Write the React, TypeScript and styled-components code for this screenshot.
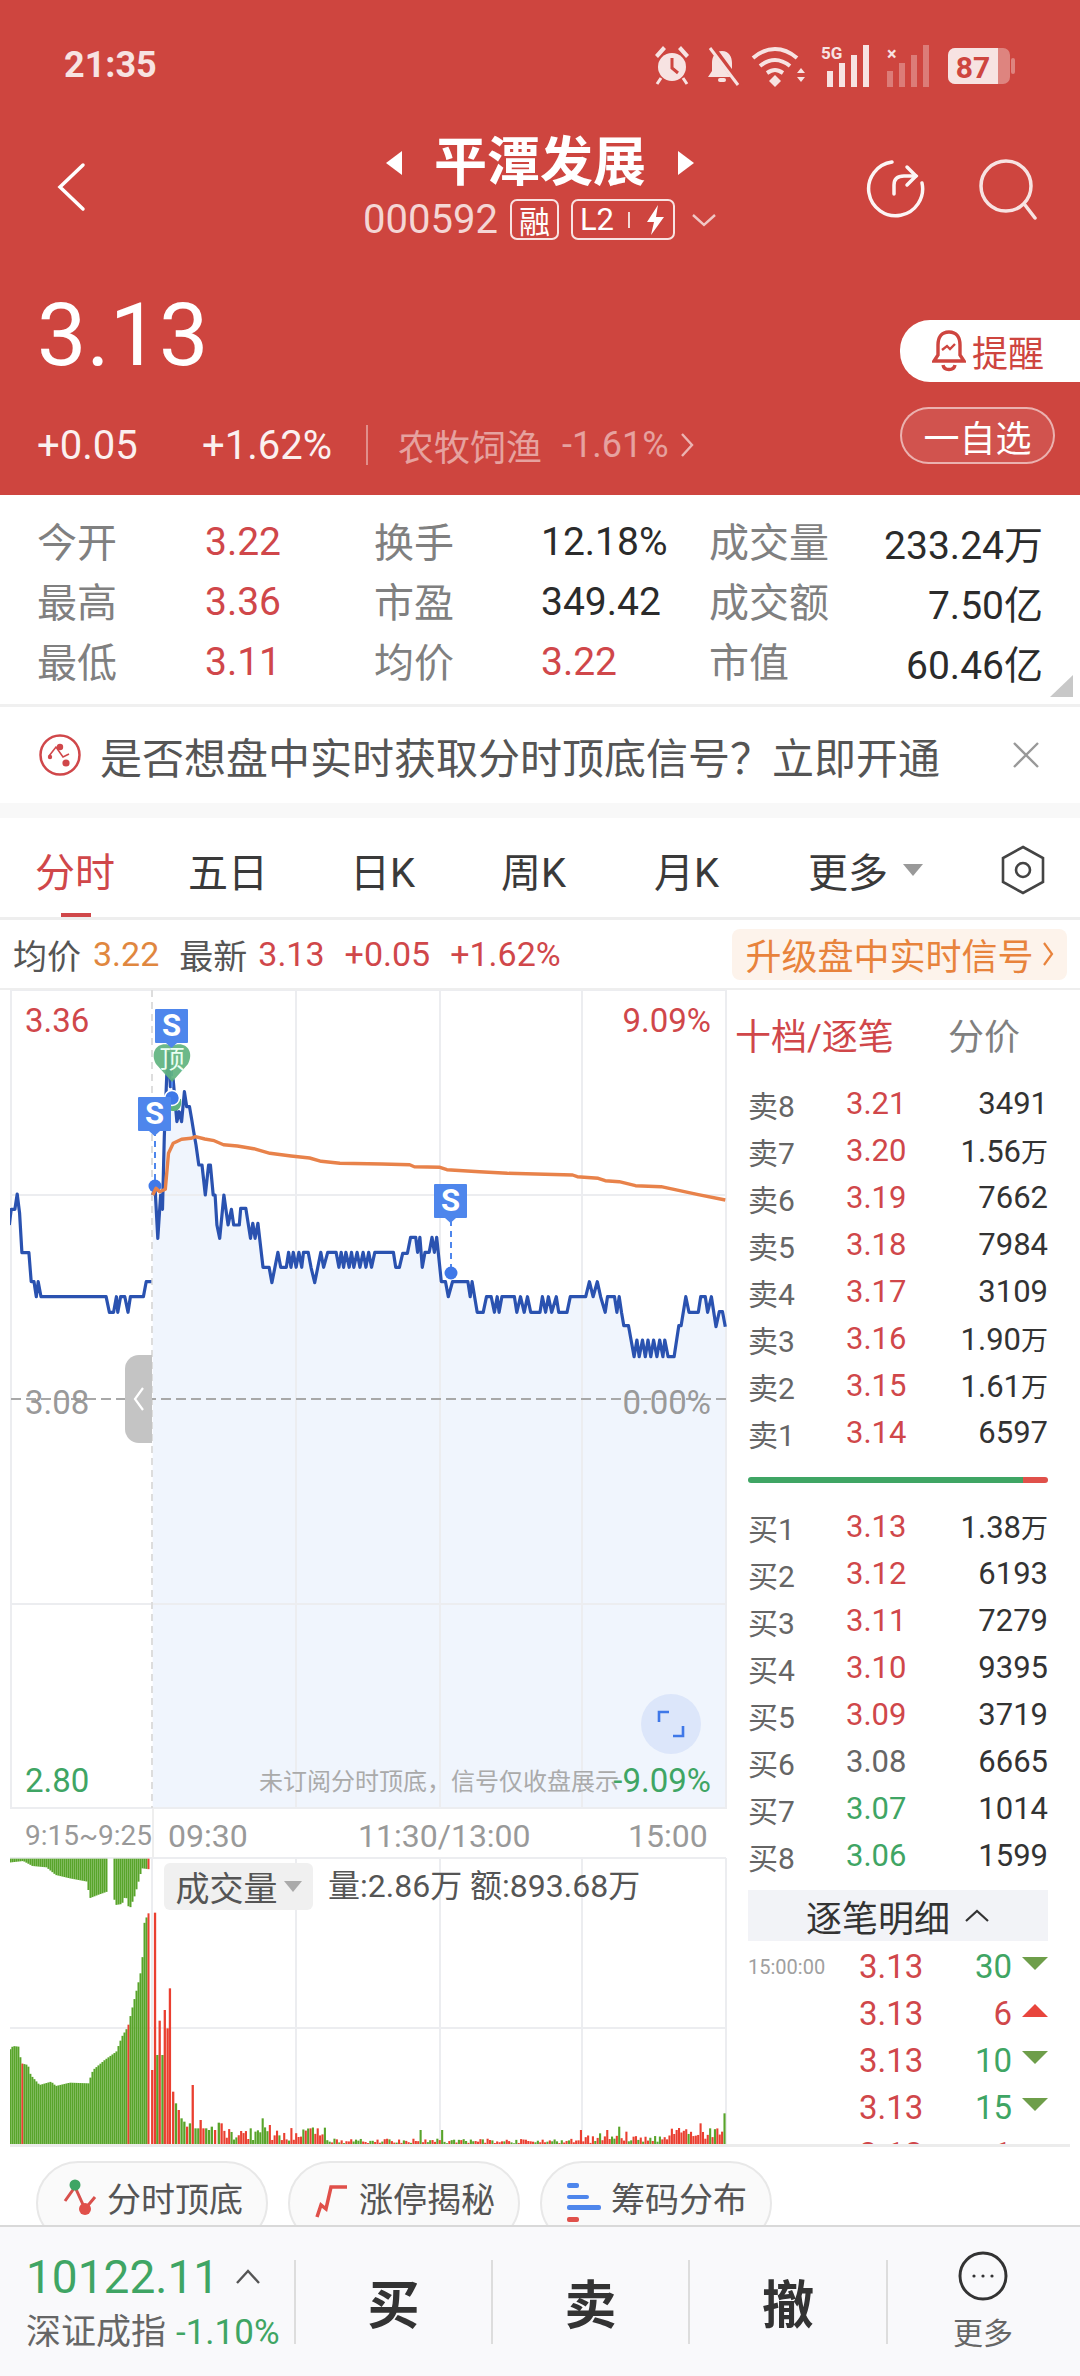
import styled, { createGlobalStyle } from 'styled-components';

const RED = '#d0474a';
const GREEN = '#3fa564';
const BRAND = '#ce453f';
const FONT = 'Roboto, "Noto Sans CJK SC", sans-serif';

const GlobalStyle = createGlobalStyle`
   html, body {
      margin: 0;
      padding: 0;
      background: #fff;
   }
   * {
      box-sizing: border-box;
   }
`;

const Page = styled.div`
   width: 1080px;
   height: 2376px;
   overflow: hidden;
   display: flex;
   flex-direction: column;
   font-family: ${FONT};
   color: #333;
`;

/* ---------- header ---------- */
const Header = styled.header`
   height: 495px;
   flex: none;
   background: ${BRAND};
   color: #fff;
`;

const StatusBar = styled.div`
   height: 126px;
   padding: 4px 64px 0;
   display: flex;
   align-items: center;
   justify-content: space-between;
`;

const Clock = styled.span`
   font-size: 36px;
   font-weight: 700;
   opacity: 0.85;
`;

const StatusIcons = styled.svg`
   display: block;
   opacity: 0.85;
`;

const TitleRow = styled.div`
   margin-top: 11px;
   display: grid;
   grid-template-columns: 1fr auto 1fr;
   align-items: center;
`;

const BackCell = styled.div`
   padding-left: 56px;
`;

const ActionCell = styled.div`
   display: flex;
   justify-content: flex-end;
   align-items: center;
   gap: 52px;
   padding-right: 42px;
`;

const TitleCol = styled.div`
   display: flex;
   flex-direction: column;
   align-items: center;
   gap: 10px;
`;

const NameLine = styled.div`
   display: flex;
   align-items: center;
   gap: 30px;
   height: 52px;
`;

const StockName = styled.span`
   font-size: 53px;
   line-height: 52px;
   font-weight: 700;
`;

const CodeLine = styled.div`
   display: flex;
   align-items: center;
   height: 41px;
   gap: 12px;
`;

const StockCode = styled.span`
   font-size: 40px;
   color: rgba(255, 255, 255, 0.78);
`;

const Badge = styled.span`
   height: 41px;
   padding: 0 7px;
   display: inline-flex;
   align-items: center;
   gap: 14px;
   border: 2px solid rgba(255, 255, 255, 0.85);
   border-radius: 7px;
   font-size: 31px;
`;

const BadgeRule = styled.i`
   width: 2px;
   height: 16px;
   background: #fff;
   opacity: 0.8;
`;

const CodeCaret = styled.svg`
   margin-left: 4px;
`;

const QuoteRow = styled.div`
   margin-top: 50px;
   display: flex;
   justify-content: space-between;
`;

const QuoteLeft = styled.div`
   padding-left: 37px;
`;

const Price = styled.div`
   font-size: 88px;
   line-height: 90px;
`;

const ChangeRow = styled.div`
   margin-top: 43px;
   height: 44px;
   display: flex;
   align-items: center;
   font-size: 40px;
`;

const ChangeValue = styled.span<{ $w: number }>`
   width: ${p => p.$w}px;
   opacity: 0.92;
`;

const ChangeRule = styled.i`
   width: 2px;
   height: 40px;
   margin-right: 30px;
   background: rgba(255, 255, 255, 0.4);
`;

const Sector = styled.span`
   font-size: 36px;
   color: rgba(255, 255, 255, 0.5);
   margin-right: 20px;
`;

const SectorCaret = styled.svg`
   margin-left: -9px;
`;

const PillCol = styled.div`
   width: 180px;
   padding-top: 30px;
   display: flex;
   flex-direction: column;
   gap: 25px;
`;

const RemindPill = styled.div`
   height: 62px;
   padding-left: 32px;
   display: flex;
   align-items: center;
   gap: 6px;
   background: #fff;
   border-radius: 30px 0 0 30px;
   color: ${BRAND};
   font-size: 36px;
`;

const WatchPill = styled.div`
   width: 155px;
   height: 57px;
   display: flex;
   align-items: center;
   justify-content: center;
   border: 2px solid rgba(255, 255, 255, 0.55);
   background: rgba(255, 255, 255, 0.08);
   border-radius: 29px;
   font-size: 36px;
`;

/* ---------- stats ---------- */
const Stats = styled.section`
   position: relative;
   height: 212px;
   flex: none;
   padding: 17px 37px 0;
   display: grid;
   grid-template-columns: 168px 169px 167px 168px 124px 210px;
   grid-auto-rows: 60px;
   align-items: center;
   border-bottom: 3px solid #f0f0f0;
`;

const StatLabel = styled.span`
   font-size: 40px;
   color: #808080;
   white-space: nowrap;
   margin-bottom: 5px;
`;

const StatValue = styled.span<{ $red?: boolean; $end?: boolean }>`
   font-size: 39px;
   color: ${p => (p.$red ? RED : '#2b2b2b')};
   text-align: ${p => (p.$end ? 'right' : 'left')};
`;

const CornerMark = styled.i`
   position: absolute;
   right: 7px;
   bottom: 7px;
   width: 0;
   height: 0;
   border-left: 23px solid transparent;
   border-bottom: 22px solid #c8c8c8;
`;

/* ---------- banner ---------- */
const Banner = styled.section`
   height: 96px;
   flex: none;
   padding: 0 40px 0 39px;
   display: flex;
   align-items: center;
   font-size: 42px;
   color: #555;
`;

const BannerText = styled.span`
   margin-left: 19px;
   flex: 1;
   white-space: nowrap;
`;

const Band = styled.div`
   height: 15px;
   flex: none;
   background: #f8f8f8;
`;

/* ---------- tabs ---------- */
const Tabs = styled.nav`
   position: relative;
   height: 102px;
   flex: none;
   padding: 4px 0 0 35px;
   display: flex;
   align-items: center;
   border-bottom: 3px solid #eee;
`;

const Tab = styled.span<{ $w: number; $on?: boolean }>`
   width: ${p => p.$w}px;
   flex: none;
   font-size: 40px;
   color: ${p => (p.$on ? RED : '#3a3a3a')};
`;

const TabMark = styled.i`
   position: absolute;
   left: 61px;
   bottom: 0;
   width: 30px;
   height: 4px;
   background: ${RED};
`;

const MoreCaret = styled.span`
   width: 97px;
   flex: none;
   display: flex;
`;

/* ---------- summary ---------- */
const Summary = styled.section`
   height: 70px;
   flex: none;
   padding: 0 13px;
   display: flex;
   align-items: center;
   font-size: 34px;
   color: #555;
   border-bottom: 2px solid #eee;
`;

const SumValue = styled.span<{ $c: string; $ml: number }>`
   color: ${p => p.$c};
   margin-left: ${p => p.$ml}px;
   margin-right: 20px;
`;

const UpgradeBtn = styled.div`
   margin-left: auto;
   height: 51px;
   width: 335px;
   display: flex;
   align-items: center;
   justify-content: center;
   gap: 8px;
   background: #fdf3eb;
   border-radius: 8px;
   color: #e8833c;
   font-size: 36px;
`;

/* ---------- market area ---------- */
const Market = styled.section`
   height: 1154px;
   flex: none;
   padding-left: 10px;
   display: flex;
   overflow: hidden;
`;

const ChartCol = styled.div`
   width: 717px;
   flex: none;
   display: flex;
   flex-direction: column;
`;

const PricePanel = styled.div`
   position: relative;
   height: 819px;
   flex: none;
`;

const VolumePanel = styled.div`
   position: relative;
   height: 287px;
   flex: none;
   overflow: hidden;
`;

const ChartSvg = styled.svg`
   display: block;
`;

const AxisLabel = styled.span<{ $c: string; $x?: number; $r?: number; $y: number }>`
   position: absolute;
   ${p => (p.$x !== undefined ? `left: ${p.$x}px;` : `right: ${p.$r}px;`)}
   top: ${p => p.$y}px;
   font-size: 33px;
   line-height: 36px;
   color: ${p => p.$c};
`;

const Notice = styled.span`
   position: absolute;
   left: 249px;
   bottom: 12px;
   font-size: 24px;
   line-height: 30px;
   color: #aaa;
   white-space: nowrap;
`;

const Handle = styled.div`
   position: absolute;
   left: 115px;
   top: 365px;
   width: 27px;
   height: 88px;
   display: flex;
   align-items: center;
   justify-content: center;
   background: #c4c4c4;
   border-radius: 14px 0 0 14px;
`;

const ExpandBtn = styled.div`
   position: absolute;
   left: 631px;
   top: 704px;
   width: 60px;
   height: 60px;
   display: flex;
   align-items: center;
   justify-content: center;
   background: #dce6fa;
   border-radius: 50%;
`;

const TimeAxis = styled.div`
   position: relative;
   height: 48px;
   flex: none;
   font-size: 32px;
   color: #999;
`;

const TimeText = styled.span<{ $x: number; $s?: number }>`
   position: absolute;
   left: ${p => p.$x}px;
   top: 7px;
   line-height: 40px;
   font-size: ${p => p.$s ?? 32}px;
`;

const TimeRule = styled.i`
   position: absolute;
   left: 142px;
   top: 0;
   width: 2px;
   height: 48px;
   background: #eee;
`;

const VolumeTag = styled.div`
   position: absolute;
   left: 154px;
   top: 6px;
   height: 47px;
   width: 149px;
   display: flex;
   align-items: center;
   justify-content: center;
   gap: 6px;
   background: #f0f0f0;
   border-radius: 6px;
   font-size: 34px;
   color: #555;
`;

const VolumeText = styled.span`
   position: absolute;
   left: 318px;
   top: 10px;
   line-height: 38px;
   font-size: 32px;
   color: #555;
   white-space: nowrap;
`;

const SmallTri = styled.i<{ $c?: string; $s?: number }>`
   width: 0;
   height: 0;
   border-left: ${p => p.$s ?? 9}px solid transparent;
   border-right: ${p => p.$s ?? 9}px solid transparent;
   border-top: ${p => (p.$s ?? 9) + 2}px solid ${p => p.$c ?? '#aaa'};
`;

/* ---------- order book ---------- */
const BookCol = styled.div`
   flex: 1;
   padding: 0 32px 0 21px;
   overflow: hidden;
`;

const BookHead = styled.div`
   height: 90px;
   margin: 0 0 0 -13px;
   padding-bottom: 3px;
   display: flex;
   align-items: center;
   font-size: 36px;
`;

const HeadActive = styled.span`
   color: ${RED};
   width: 213px;
`;

const HeadPlain = styled.span`
   color: #808080;
`;

const BookList = styled.div<{ $mt: number }>`
   margin-top: ${p => p.$mt}px;
`;

const BookRow = styled.div`
   height: 47px;
   display: grid;
   grid-template-columns: 98px 1fr auto;
   align-items: center;
`;

const BookLabel = styled.span`
   font-size: 30px;
   color: #666;
`;

const BookPrice = styled.span<{ $c: string }>`
   font-size: 31px;
   color: ${p => p.$c};
`;

const BookQty = styled.span`
   font-size: 31px;
   color: #333;
`;

const BookUnit = styled.span`
   font-size: 27px;
`;

const RatioBar = styled.div`
   margin-top: 21px;
   height: 6px;
   display: flex;
   border-radius: 3px;
   overflow: hidden;
`;

const RatioPart = styled.i<{ $c: string; $w: number }>`
   width: ${p => p.$w}px;
   background: ${p => p.$c};
`;

const DetailHead = styled.div`
   margin-top: 11px;
   height: 51px;
   display: flex;
   align-items: center;
   justify-content: center;
   gap: 14px;
   background: #f2f3f7;
   font-size: 36px;
   color: #333;
`;

const TradeList = styled.div`
   margin-top: 2px;
`;

const TradeRow = styled.div`
   height: 47px;
   display: grid;
   grid-template-columns: 111px 64px 1fr 36px;
   align-items: center;
`;

const TradeTime = styled.span`
   font-size: 20px;
   color: #a0a0a0;
`;

const TradePrice = styled.span`
   font-size: 33px;
   color: ${RED};
`;

const TradeQty = styled.span<{ $up?: boolean }>`
   font-size: 33px;
   text-align: right;
   color: ${p => (p.$up ? RED : GREEN)};
`;

const TradeTri = styled.i<{ $up?: boolean }>`
   justify-self: end;
   width: 0;
   height: 0;
   margin-bottom: 6px;
   border-left: 13px solid transparent;
   border-right: 13px solid transparent;
   ${p => (p.$up ? 'border-bottom: 13px solid #e8453c;' : 'border-top: 13px solid #6e9e4a;')}
`;

const EndRule = styled.div`
   width: 1060px;
   margin-left: 10px;
   height: 3px;
   flex: none;
   background: #ececec;
`;

/* ---------- chips ---------- */
const ChipRow = styled.section`
   height: 78px;
   flex: none;
   padding: 14px 0 0 36px;
   display: flex;
   gap: 20px;
   overflow: hidden;
`;

const Chip = styled.div`
   width: 232px;
   height: 84px;
   flex: none;
   display: flex;
   align-items: flex-start;
   justify-content: center;
   gap: 8px;
   padding-top: 16px;
   background: #fafafa;
   border: 2px solid #e8e8e8;
   border-radius: 42px;
   font-size: 34px;
   line-height: 42px;
   color: #555;
`;

/* ---------- bottom bar ---------- */
const BottomBar = styled.footer`
   height: 151px;
   flex: none;
   display: grid;
   grid-template-columns: 294px 197px 197px 198px 1fr;
   align-items: center;
   background: #f9f9fb;
   border-top: 2px solid #d9d9d9;
`;

const IndexCell = styled.div`
   padding-left: 26px;
   display: flex;
   flex-direction: column;
   gap: 10px;
`;

const IndexValue = styled.div`
   display: flex;
   align-items: center;
   gap: 16px;
   font-size: 46px;
   line-height: 52px;
   color: ${GREEN};
`;

const IndexName = styled.div`
   font-size: 35px;
   line-height: 40px;
   color: #666;
   white-space: nowrap;
`;

const IndexPct = styled.span`
   margin-left: 10px;
   color: ${GREEN};
`;

const ActionBtn = styled.div`
   height: 84px;
   display: flex;
   flex-direction: column;
   align-items: center;
   justify-content: center;
   border-left: 2px solid #ddd;
   font-size: 52px;
   font-weight: 700;
   color: #333;
`;

const MoreBtn = styled(ActionBtn)`
   height: 128px;
   border-left: none;
   position: relative;
   gap: 8px;
   font-size: 30px;
   font-weight: 400;
   color: #666;

   &::before {
      content: '';
      position: absolute;
      left: 0;
      top: 22px;
      width: 2px;
      height: 84px;
      background: #ddd;
   }
`;

/* ---------- chart data (coordinates read off the reference) ---------- */
const zx = (x: number) => x / 2.148;
const zy = (y: number) => 980 + y / 3;
const vy = (y: number) => 1780 + y / 3;
const toPts = (pts: number[][]) => pts.map(([x, y]) => `${zx(x).toFixed(1)},${zy(y).toFixed(1)}`).join(' ');

const preLine = [
   [20, 735], [24, 688], [32, 688], [37, 642], [42, 700], [47, 818], [62, 818], [67, 905], [73, 905], [78, 950], [82, 905], [88, 950],
   [228, 950], [235, 997], [244, 997], [250, 950], [253, 997], [259, 950], [268, 950], [275, 997], [280, 950], [308, 950], [314, 905], [325, 905],
];

const mainLine = [
   [328, 645], [333, 620], [339, 775], [345, 645], [349, 688], [353, 470], [358, 290], [362, 220], [366, 320], [372, 300], [380, 425],
   [385, 395], [390, 425], [396, 335], [401, 380], [407, 380], [412, 420], [416, 455], [421, 495], [427, 555], [434, 555], [441, 645],
   [448, 555], [452, 555], [458, 645], [462, 645], [466, 735], [472, 775], [481, 645], [490, 735], [497, 688], [502, 735], [514, 735],
   [517, 685], [528, 685], [538, 775], [543, 730], [548, 775], [554, 730], [565, 862], [578, 862], [584, 908], [597, 817], [603, 862],
   [615, 862], [620, 817], [625, 862], [630, 817], [636, 862], [642, 817], [648, 862], [652, 817], [662, 817], [668, 862], [676, 908],
   [689, 817], [695, 862], [704, 817], [722, 817], [728, 862], [733, 817], [738, 862], [743, 817], [750, 862], [755, 817], [760, 862],
   [767, 817], [773, 862], [780, 817], [786, 862], [792, 817], [798, 862], [805, 817], [845, 817], [850, 862], [858, 862], [865, 820],
   [875, 820], [882, 772], [893, 772], [897, 817], [902, 772], [907, 862], [913, 817], [922, 817], [928, 772], [933, 817], [938, 772],
   [948, 905], [957, 905], [963, 950], [972, 905], [1005, 905], [1010, 950], [1014, 905], [1025, 997], [1038, 997], [1045, 950], [1055, 950],
   [1062, 997], [1068, 950], [1072, 997], [1078, 950], [1105, 950], [1110, 997], [1118, 950], [1126, 997], [1133, 950], [1140, 997],
   [1160, 997], [1165, 950], [1172, 997], [1178, 950], [1185, 997], [1195, 950], [1200, 997], [1218, 997], [1225, 950], [1258, 950],
   [1266, 905], [1274, 950], [1283, 905], [1290, 950], [1300, 997], [1305, 950], [1320, 950], [1325, 997], [1330, 950], [1335, 997],
   [1340, 1037], [1350, 1037], [1362, 1130], [1368, 1080], [1373, 1130], [1380, 1080], [1386, 1130], [1392, 1080], [1398, 1130], [1404, 1080],
   [1411, 1130], [1417, 1080], [1424, 1130], [1428, 1080], [1435, 1130], [1448, 1130], [1458, 1037], [1463, 1037], [1473, 950], [1480, 997],
   [1500, 997], [1505, 950], [1515, 950], [1520, 997], [1528, 950], [1538, 1040], [1545, 995], [1552, 995], [1558, 1040],
];

const avgLine = [
   [328, 645], [335, 625], [343, 635], [355, 628], [362, 520], [372, 490], [390, 478], [410, 475], [420, 470], [440, 477], [460, 482],
   [480, 494], [510, 498], [545, 506], [580, 520], [625, 528], [665, 534], [690, 544], [730, 550], [820, 552], [880, 554], [890, 560],
   [945, 562], [960, 569], [1030, 575], [1090, 580], [1230, 585], [1240, 590], [1285, 595], [1300, 602], [1330, 605], [1365, 617],
   [1420, 620], [1460, 632], [1500, 644], [1558, 660],
];

const interp = (table: number[][], x: number) => {
   for (let i = 1; i < table.length; i++) {
      if (x <= table[i][0]) {
         const [x0, y0] = table[i - 1];
         const [x1, y1] = table[i];
         return y0 + ((y1 - y0) * (x - x0)) / (x1 - x0);
      }
   }
   return table[table.length - 1][1];
};

// zoomed x -> top of the bar, auction part of the volume chart
const auctionBottom = [[18, 815], [28, 798], [40, 800], [46, 850], [60, 855], [66, 885], [85, 915], [110, 905], [120, 918], [150, 908], [190, 910], [200, 870], [225, 840], [250, 815], [262, 770], [275, 740], [285, 680], [297, 610], [305, 560], [310, 430], [318, 400]];
const auctionTop = [[18, 248], [50, 243], [70, 258], [100, 262], [120, 285], [150, 295], [188, 305], [192, 355], [210, 345], [230, 335]];
const auctionTop2 = [[242, 330], [248, 375], [262, 372], [270, 345], [278, 390], [290, 345], [305, 265], [322, 268]];

const peaks: [number, number, string][] = [
   [327, 870, 'r'], [333, 398, 'r'], [338, 825, 'g'], [343, 722, 'r'], [349, 825, 'g'], [354, 690, 'r'], [360, 745, 'r'], [365, 625, 'r'], [372, 935, 'r'],
   [378, 970, 'g'], [384, 990, 'r'], [390, 1015, 'g'], [396, 1025, 'g'], [402, 1040, 'r'], [408, 1030, 'g'], [414, 915, 'r'], [420, 1045, 'g'], [426, 1045, 'g'],
   [431, 1020, 'r'], [437, 1045, 'r'], [443, 1045, 'g'], [449, 1050, 'g'], [455, 1040, 'g'], [462, 1050, 'r'], [470, 1028, 'g'], [476, 1030, 'r'],
   [538, 1045, 'g'], [562, 1015, 'g'], [578, 1035, 'r'], [595, 1052, 'r'], [668, 1045, 'r'], [680, 1045, 'r'], [905, 1050, 'g'], [948, 1050, 'g'],
   [1250, 1050, 'r'], [1290, 1060, 'g'], [1305, 1050, 'r'], [1328, 1040, 'g'], [1345, 1055, 'r'], [1455, 1050, 'r'], [1503, 1030, 'r'], [1525, 1045, 'g'], [1557, 1000, 'g'],
];

type Bar = { x: number; top: number; bottom: number; c: string; w: number };

const BAR_GREEN = '#58a42a';
const BAR_RED = '#ea3f30';
const buildBars = () => {
   const bars: Bar[] = [];
   let seed = 17;
   const rnd = () => {
      seed = (seed * 1103515245 + 12345) & 0x7fffffff;
      return seed / 0x7fffffff;
   };
   // auction: bars hang from the top and rise from the bottom
   for (let z = 18; z <= 322; z += 4.3) {
      const red = Math.abs(z - 48) < 2.2 || Math.abs(z - 275) < 2.2 || z > 316;
      const w = 2;
      bars.push({ x: zx(z), top: vy(interp(auctionBottom, z)), bottom: vy(1092), c: red ? BAR_RED : BAR_GREEN, w });
      if (z < 232) bars.push({ x: zx(z), top: vy(236), bottom: vy(interp(auctionTop, z)), c: BAR_GREEN, w });
      if (z > 242) bars.push({ x: zx(z), top: vy(236), bottom: vy(interp(auctionTop2, z)), c: z > 316 ? BAR_RED : BAR_GREEN, w });
   }
   peaks.slice(0, 26).forEach(([z, top, c]) => {
      bars.push({ x: zx(z), top: vy(top), bottom: vy(1092), c: c === 'r' ? BAR_RED : BAR_GREEN, w: 2.3 });
   });
   for (let z = 482; z <= 1557; z += 5.14) {
      const span = z < 700 ? [10, 50] : z < 1230 ? [2, 16] : z < 1440 ? [3, 26] : [15, 48];
      const h = span[0] + rnd() * (span[1] - span[0]);
      const peak = peaks.slice(26).find(p => Math.abs(p[0] - z) < 2.6);
      const red = z > 1440 ? rnd() < 0.8 : rnd() < 0.6;
      bars.push({
         x: zx(z),
         top: vy(peak ? peak[1] : 1092 - h),
         bottom: vy(1092),
         c: (peak ? peak[2] === 'r' : red) ? BAR_RED : BAR_GREEN,
         w: 2.1,
      });
   }
   return bars;
};

const volumeBars = buildBars();

const sells = [
   ['卖8', '3.21', '3491'], ['卖7', '3.20', '1.56万'], ['卖6', '3.19', '7662'], ['卖5', '3.18', '7984'],
   ['卖4', '3.17', '3109'], ['卖3', '3.16', '1.90万'], ['卖2', '3.15', '1.61万'], ['卖1', '3.14', '6597'],
];
const buys = [
   ['买1', '3.13', '1.38万'], ['买2', '3.12', '6193'], ['买3', '3.11', '7279'], ['买4', '3.10', '9395'],
   ['买5', '3.09', '3719'], ['买6', '3.08', '6665'], ['买7', '3.07', '1014'], ['买8', '3.06', '1599'],
];
const trades = [
   { time: '15:00:00', qty: '30' }, { time: '', qty: '6', up: true }, { time: '', qty: '10' }, { time: '', qty: '15' }, { time: '', qty: '1', up: true },
];

const buyColor = (price: string) => {
   if (price === '3.08') return '#666';
   return Number(price) > 3.08 ? RED : GREEN;
};

const grid = '#ecedf0';

function Qty({ value }: { value: string }) {
   const wan = value.endsWith('万');
   return (
      <BookQty>
         {wan ? value.slice(0, -1) : value}
         {wan && <BookUnit>万</BookUnit>}
      </BookQty>
   );
}

function SMarker({ x, y }: { x: number; y: number }) {
   return (
      <g>
         <rect x={x} y={y} width={33} height={34} rx={1} fill="#4e86ec" />
         <path d={`M${x + 11} ${y + 34}h11l-5.5 5z`} fill="#4e86ec" />
         <text x={x + 16.5} y={y + 27} textAnchor="middle" fontSize="31" fontWeight="700" fill="#fff" fontFamily={FONT}>
            S
         </text>
      </g>
   );
}

function StatusGlyphs() {
   return (
      <StatusIcons width="372" height="44" viewBox="0 0 372 44">
         {/* alarm */}
         <g fill="#fff" transform="translate(9 0)">
            <circle cx="19" cy="24" r="14" />
            <path d="M2 12 L10 3 L13 6 L5 15Z M36 12 L28 3 L25 6 L33 15Z" />
            <path d="M8 35 l-4 6 M30 35 l4 6" stroke="#fff" strokeWidth="3" />
            <path d="M19 15v10l6 5" stroke={BRAND} strokeWidth="3" fill="none" />
         </g>
         {/* muted bell */}
         <g transform="translate(8 0)">
            <path d="M70 8c-7 0-10 6-10 12v8l-4 6h28l-4-6v-8c0-6-3-12-10-12z" fill="#fff" />
            <rect x="66" y="35" width="8" height="4" rx="2" fill="#fff" />
            <path d="M60 4 L88 42" stroke={BRAND} strokeWidth="6" />
            <path d="M58 5 L86 42" stroke="#fff" strokeWidth="3" />
         </g>
         {/* wifi */}
         <g fill="none" stroke="#fff" strokeWidth="4">
            <path d="M109 15c14-12 30-12 44 0" />
            <path d="M116 23c10-8 20-8 30 0" />
            <path d="M123 30c6-4 10-4 16 0" />
         </g>
         <path d="M131 32l6 6-6 6-6-6z" fill="#fff" />
         <path d="M153 30l4-5 4 5zM153 34l4 5 4-5z" fill="#fff" />
         {/* 5G + signal */}
         <text x="177" y="16" fontSize="17" fontWeight="700" fill="#fff" fontFamily={FONT}>
            5G
         </text>
         <g fill="#fff" transform="translate(5 0)">
            <rect x="178" y="28" width="6" height="16" />
            <rect x="190" y="20" width="6" height="24" />
            <rect x="202" y="12" width="6" height="32" />
            <rect x="214" y="2" width="6" height="42" />
         </g>
         {/* second sim */}
         <text x="243" y="17" fontSize="18" fontWeight="700" fill="#fff" fontFamily={FONT}>
            ×
         </text>
         <g fill="#fff" opacity="0.35" transform="translate(5 0)">
            <rect x="238" y="28" width="6" height="16" />
            <rect x="250" y="20" width="6" height="24" />
            <rect x="262" y="12" width="6" height="32" />
            <rect x="274" y="2" width="6" height="42" />
         </g>
         {/* battery */}
         <g transform="translate(4 0)">
            <rect x="300" y="5" width="62" height="36" rx="7" fill="#fff" opacity="0.4" />
            <path d="M307 5h43v36h-43a7 7 0 0 1-7-7v-22a7 7 0 0 1 7-7z" fill="#fff" />
            <rect x="363" y="15" width="4" height="16" rx="2" fill="#fff" opacity="0.4" />
            <text x="325" y="35" textAnchor="middle" fontSize="30" fontWeight="700" fill={BRAND} fontFamily={FONT}>
               87
            </text>
         </g>
      </StatusIcons>
   );
}

export default function App() {
   return (
      <Page>
         <GlobalStyle />
         <Header>
            <StatusBar>
               <Clock>21:35</Clock>
               <StatusGlyphs />
            </StatusBar>
            <TitleRow>
               <BackCell>
                  <svg width="30" height="50" viewBox="0 0 30 50" fill="none" stroke="#fff" strokeWidth="3.5" strokeLinecap="round">
                     <path d="M27 3 L4 25 L27 47" />
                  </svg>
               </BackCell>
               <TitleCol>
                  <NameLine>
                     <svg width="20" height="26" viewBox="0 0 20 26" fill="#fff">
                        <path d="M18 1v24L2 13z" />
                     </svg>
                     <StockName>平潭发展</StockName>
                     <svg width="20" height="26" viewBox="0 0 20 26" fill="#fff">
                        <path d="M2 1v24l16-12z" />
                     </svg>
                  </NameLine>
                  <CodeLine>
                     <StockCode>000592</StockCode>
                     <Badge>融</Badge>
                     <Badge>
                        L2
                        <BadgeRule />
                        <svg width="22" height="32" viewBox="0 0 22 32" fill="#fff">
                           <path d="M14 1 L3 18 h7 L7 31 L20 13 h-8z" />
                        </svg>
                     </Badge>
                     <CodeCaret width="26" height="14" viewBox="0 0 26 14" fill="none" stroke="rgba(255,255,255,.7)" strokeWidth="2.4">
                        <path d="M2 2l11 10 11-10" />
                     </CodeCaret>
                  </CodeLine>
               </TitleCol>
               <ActionCell>
                  <svg width="60" height="60" viewBox="0 0 60 60" fill="none" stroke="#fff" strokeWidth="3.5" opacity="0.95" strokeLinecap="round">
                     <path d="M26 3 A27 27 0 1 0 56 24" />
                     <path d="M28 35 V26 Q28 17 38 17 H50" />
                     <path d="M41 8 l9 9 -9 9" />
                  </svg>
                  <svg width="60" height="62" viewBox="0 0 60 62" fill="none" stroke="#fff" strokeWidth="3.5" opacity="0.85" strokeLinecap="round">
                     <circle cx="28" cy="28" r="25" />
                     <path d="M47 47 L57 60" />
                  </svg>
               </ActionCell>
            </TitleRow>
            <QuoteRow>
               <QuoteLeft>
                  <Price>3.13</Price>
                  <ChangeRow>
                     <ChangeValue $w={165}>+0.05</ChangeValue>
                     <ChangeValue $w={164}>+1.62%</ChangeValue>
                     <ChangeRule />
                     <Sector>农牧饲渔</Sector>
                     <Sector>-1.61%</Sector>
                     <SectorCaret width="14" height="28" viewBox="0 0 14 28" fill="none" stroke="rgba(255,255,255,.6)" strokeWidth="2.4">
                        <path d="M2 3l10 11-10 11" />
                     </SectorCaret>
                  </ChangeRow>
               </QuoteLeft>
               <PillCol>
                  <RemindPill>
                     <svg width="34" height="44" viewBox="0 0 34 44" fill="none" stroke={BRAND} strokeWidth="3.4">
                        <path d="M17 3c-8 0-11 6-11 13v10l-4 6h30l-4-6V16c0-7-3-13-11-13z" />
                        <path d="M11 36c1 6 11 6 12 0" />
                        <path d="M10 21l5-4 3 3 5-5" strokeWidth="2.4" />
                     </svg>
                     提醒
                  </RemindPill>
                  <WatchPill>一自选</WatchPill>
               </PillCol>
            </QuoteRow>
         </Header>

         <Stats>
            <StatLabel>今开</StatLabel>
            <StatValue $red>3.22</StatValue>
            <StatLabel>换手</StatLabel>
            <StatValue>12.18%</StatValue>
            <StatLabel>成交量</StatLabel>
            <StatValue $end>233.24万</StatValue>
            <StatLabel>最高</StatLabel>
            <StatValue $red>3.36</StatValue>
            <StatLabel>市盈</StatLabel>
            <StatValue>349.42</StatValue>
            <StatLabel>成交额</StatLabel>
            <StatValue $end>7.50亿</StatValue>
            <StatLabel>最低</StatLabel>
            <StatValue $red>3.11</StatValue>
            <StatLabel>均价</StatLabel>
            <StatValue $red>3.22</StatValue>
            <StatLabel>市值</StatLabel>
            <StatValue $end>60.46亿</StatValue>
            <CornerMark />
         </Stats>

         <Banner>
            <svg width="42" height="42" viewBox="0 0 42 42" fill="none">
               <circle cx="21" cy="21" r="19.5" stroke={RED} strokeWidth="2.5" />
               <path d="M10 22l7-9 7 10 6-3" stroke={RED} strokeWidth="1.6" />
               <circle cx="21" cy="13" r="3.2" fill={RED} />
               <circle cx="27" cy="29" r="3.6" fill={RED} />
               <circle cx="11" cy="23" r="2.2" fill={RED} />
            </svg>
            <BannerText>{'是否想盘中实时获取分时顶底信号\uFF1F立即开通'}</BannerText>
            <svg width="28" height="28" viewBox="0 0 28 28" stroke="#999" strokeWidth="2.4">
               <path d="M2 2l24 24M26 2L2 26" />
            </svg>
         </Banner>
         <Band />

         <Tabs>
            <Tab $w={153} $on>
               分时
            </Tab>
            <Tab $w={162}>五日</Tab>
            <Tab $w={151}>日K</Tab>
            <Tab $w={153}>周K</Tab>
            <Tab $w={154}>月K</Tab>
            <Tab $w={95}>更多</Tab>
            <MoreCaret>
               <SmallTri $c="#999" $s={10} />
            </MoreCaret>
            <svg width="46" height="50" viewBox="0 0 46 50" fill="none" stroke="#444" strokeWidth="2.6">
               <path d="M23 2l20 11v24L23 48 3 37V13z" />
               <circle cx="23" cy="25" r="7" />
            </svg>
            <TabMark />
         </Tabs>

         <Summary>
            均价
            <SumValue $c="#e0873f" $ml={12}>
               3.22
            </SumValue>
            最新
            <SumValue $c={RED} $ml={11}>
               3.13
            </SumValue>
            <SumValue $c={RED} $ml={0}>
               +0.05
            </SumValue>
            <SumValue $c={RED} $ml={0}>
               +1.62%
            </SumValue>
            <UpgradeBtn>
               升级盘中实时信号
               <svg width="12" height="26" viewBox="0 0 12 26" fill="none" stroke="#e8833c" strokeWidth="2.2">
                  <path d="M2 2l8 11-8 11" />
               </svg>
            </UpgradeBtn>
         </Summary>

         <Market>
            <ChartCol>
               <PricePanel>
                  <ChartSvg width="717" height="819" viewBox="10 990 717 819">
                     <polygon points={`${toPts(mainLine)} ${zx(1558)},1808 ${zx(328)},1808`} fill="#f0f5fd" />
                     <g stroke={grid} strokeWidth="2" fill="none">
                        <rect x="11" y="990" width="715" height="818" />
                        <path d="M11 1195H726M11 1604H726M296 990V1808M440 990V1808M582 990V1808" />
                     </g>
                     <path d="M152 990V1808" stroke="#ddd" strokeWidth="2" strokeDasharray="7 5" />
                     <path d="M11 1399H726" stroke="#a8a8a8" strokeWidth="2" strokeDasharray="10 5" />
                     <polyline points={toPts(preLine)} fill="none" stroke="#2a52b0" strokeWidth="3.2" strokeLinejoin="round" />
                     <polyline points={toPts(mainLine)} fill="none" stroke="#2a52b0" strokeWidth="3.2" strokeLinejoin="round" />
                     <path d="M155 1130V1186M172 1070V1098M451 1220V1273" stroke="#4e86ec" strokeWidth="2" strokeDasharray="6 5" />
                     <circle cx="155" cy="1186" r="6.5" fill="#3f78e8" />
                     <polyline points={toPts(avgLine)} fill="none" stroke="#e8824a" strokeWidth="3.4" strokeLinejoin="round" />
                     <path d="M172 1098c-9 5-8 13 2 13 6 0 8-6 7-12z" fill="#5fb37f" />
                     <circle cx="172" cy="1098" r="7.5" fill="#3f78e8" stroke="#fff" strokeWidth="1.6" />
                     <path d="M172 1082 L156 1064 C149 1051 159 1040 172 1046 C185 1040 195 1051 188 1064 Z" fill="#5fb37f" fillOpacity="0.92" />
                     <text x="172" y="1068" textAnchor="middle" fontSize="25" fill="#eafff2" fontFamily={FONT}>
                        顶
                     </text>
                     <SMarker x={155} y={1009} />
                     <SMarker x={138} y={1097} />
                     <SMarker x={434} y={1184} />
                     <circle cx="451" cy="1273" r="6.5" fill="#3f78e8" />
                  </ChartSvg>
                  <AxisLabel $c={RED} $x={15} $y={13}>
                     3.36
                  </AxisLabel>
                  <AxisLabel $c={RED} $r={16} $y={13}>
                     9.09%
                  </AxisLabel>
                  <AxisLabel $c="#999" $x={15} $y={395}>
                     3.08
                  </AxisLabel>
                  <AxisLabel $c="#999" $r={16} $y={395}>
                     0.00%
                  </AxisLabel>
                  <AxisLabel $c={GREEN} $x={15} $y={773}>
                     2.80
                  </AxisLabel>
                  <AxisLabel $c={GREEN} $r={16} $y={773}>
                     -9.09%
                  </AxisLabel>
                  <Notice>{'未订阅分时顶底\uFF0C信号仅收盘展示'}</Notice>
                  <Handle>
                     <svg width="12" height="26" viewBox="0 0 12 26" fill="none" stroke="#fff" strokeWidth="2.2">
                        <path d="M10 2L2 13l8 11" />
                     </svg>
                  </Handle>
                  <ExpandBtn>
                     <svg width="28" height="28" viewBox="0 0 28 28" fill="none" stroke="#3f78e8" strokeWidth="2.6">
                        <path d="M2 12V2h10M26 16v10H16" />
                     </svg>
                  </ExpandBtn>
               </PricePanel>

               <TimeAxis>
                  <TimeText $x={15} $s={28}>
                     9:15~9:25
                  </TimeText>
                  <TimeRule />
                  <TimeText $x={158}>09:30</TimeText>
                  <TimeText $x={348}>11:30/13:00</TimeText>
                  <TimeText $x={618}>15:00</TimeText>
               </TimeAxis>

               <VolumePanel>
                  <ChartSvg width="717" height="287" viewBox="10 1857 717 287">
                     <g stroke={grid} strokeWidth="2" fill="none">
                        <path d="M10 1858H726M10 2028H726M152 1858V2144M296 1858V2144M440 1858V2144M582 1858V2144M726 1858V2144" />
                     </g>
                     {volumeBars.map((b, i) => (
                        <rect key={i} x={b.x - b.w / 2} y={b.top} width={b.w} height={Math.max(b.bottom - b.top, 0.5)} fill={b.c} />
                     ))}
                  </ChartSvg>
                  <VolumeTag>
                     成交量
                     <SmallTri />
                  </VolumeTag>
                  <VolumeText>量:2.86万 额:893.68万</VolumeText>
               </VolumePanel>
            </ChartCol>

            <BookCol>
               <BookHead>
                  <HeadActive>十档/逐笔</HeadActive>
                  <HeadPlain>分价</HeadPlain>
               </BookHead>
               <BookList $mt={0}>
                  {sells.map(row => (
                     <BookRow key={row[0]}>
                        <BookLabel>{row[0]}</BookLabel>
                        <BookPrice $c={RED}>{row[1]}</BookPrice>
                        <Qty value={row[2]} />
                     </BookRow>
                  ))}
               </BookList>
               <RatioBar>
                  <RatioPart $c={GREEN} $w={278} />
                  <RatioPart $c="#e0504a" $w={25} />
               </RatioBar>
               <BookList $mt={20}>
                  {buys.map(row => (
                     <BookRow key={row[0]}>
                        <BookLabel>{row[0]}</BookLabel>
                        <BookPrice $c={buyColor(row[1])}>{row[1]}</BookPrice>
                        <Qty value={row[2]} />
                     </BookRow>
                  ))}
               </BookList>
               <DetailHead>
                  逐笔明细
                  <svg width="26" height="14" viewBox="0 0 26 14" fill="none" stroke="#333" strokeWidth="2.2">
                     <path d="M2 12L13 2l11 10" />
                  </svg>
               </DetailHead>
               <TradeList>
                  {trades.map((t, i) => (
                     <TradeRow key={i}>
                        <TradeTime>{t.time}</TradeTime>
                        <TradePrice>3.13</TradePrice>
                        <TradeQty $up={t.up}>{t.qty}</TradeQty>
                        <TradeTri $up={t.up} />
                     </TradeRow>
                  ))}
               </TradeList>
            </BookCol>
         </Market>
         <EndRule />

         <ChipRow>
            <Chip>
               <svg width="38" height="46" viewBox="0 0 38 46" fill="none">
                  <path d="M4 22L14 8l10 22 10-12" stroke="#d8504c" strokeWidth="3" />
                  <circle cx="14" cy="6" r="5.5" fill="#3fa564" />
                  <circle cx="24" cy="30" r="6" fill="#e0504a" />
               </svg>
               分时顶底
            </Chip>
            <Chip>
               <svg width="38" height="46" viewBox="0 0 38 46" fill="none" stroke="#e0504a" strokeWidth="3.5">
                  <path d="M4 38l4-12 5 4 5-22h16" />
               </svg>
               涨停揭秘
            </Chip>
            <Chip>
               <svg width="38" height="46" viewBox="0 0 38 46">
                  <rect x="2" y="4" width="12" height="5" rx="2" fill="#4e86ec" />
                  <rect x="2" y="16" width="22" height="4" rx="2" fill="#4e86ec" />
                  <rect x="2" y="26" width="34" height="5" rx="2" fill="#4e86ec" />
                  <rect x="2" y="38" width="12" height="5" rx="2" fill="#e0504a" />
               </svg>
               筹码分布
            </Chip>
         </ChipRow>

         <BottomBar>
            <IndexCell>
               <IndexValue>
                  10122.11
                  <svg width="26" height="16" viewBox="0 0 26 16" fill="none" stroke="#555" strokeWidth="2.4">
                     <path d="M2 14L13 2l11 12" />
                  </svg>
               </IndexValue>
               <IndexName>
                  深证成指
                  <IndexPct>-1.10%</IndexPct>
               </IndexName>
            </IndexCell>
            <ActionBtn>买</ActionBtn>
            <ActionBtn>卖</ActionBtn>
            <ActionBtn>撤</ActionBtn>
            <MoreBtn>
               <svg width="50" height="50" viewBox="0 0 50 50" fill="none" stroke="#333" strokeWidth="3">
                  <circle cx="25" cy="25" r="23" />
                  <circle cx="16" cy="25" r="1.6" fill="#333" stroke="none" />
                  <circle cx="25" cy="25" r="1.6" fill="#333" stroke="none" />
                  <circle cx="34" cy="25" r="1.6" fill="#333" stroke="none" />
               </svg>
               更多
            </MoreBtn>
         </BottomBar>
      </Page>
   );
}
